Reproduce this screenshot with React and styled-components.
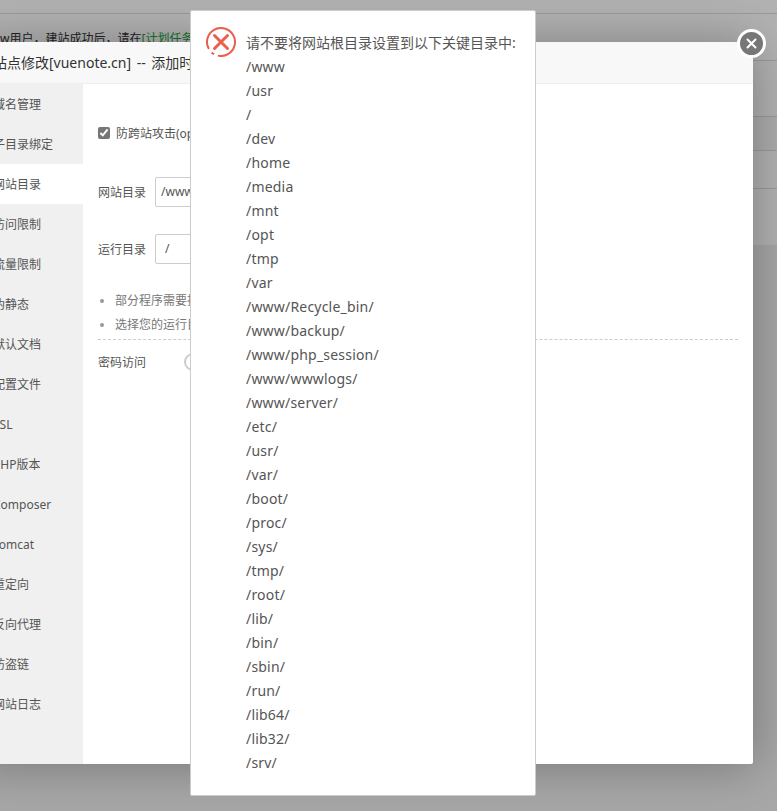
import React from 'react'
import styled, { createGlobalStyle } from 'styled-components'

const menuItems = ['域名管理', '子目录绑定', '网站目录', '访问限制', '流量限制', '伪静态', '默认文档', '配置文件', 'SSL', 'PHP版本', 'Composer', 'Tomcat', '重定向', '反向代理', '防盗链', '网站日志']

const blockedPaths = ['/www', '/usr', '/', '/dev', '/home', '/media', '/mnt', '/opt', '/tmp', '/var', '/www/Recycle_bin/', '/www/backup/', '/www/php_session/', '/www/wwwlogs/', '/www/server/', '/etc/', '/usr/', '/var/', '/boot/', '/proc/', '/sys/', '/tmp/', '/root/', '/lib/', '/bin/', '/sbin/', '/run/', '/lib64/', '/lib32/', '/srv/']

const GlobalStyle = createGlobalStyle`
  html, body {
    margin: 0;
    padding: 0;
    background: #f0f0f0;
    font-family: "Noto Sans", "Noto Sans CJK SC", sans-serif;
  }
`

const Page = styled.div`
  position: relative;
  width: 777px;
  height: 811px;
  overflow: hidden;
  background: #f0f0f0;
`

const BackRow = styled.div`
  height: ${p => p.$height}px;
  box-sizing: border-box;
  background: ${p => p.$tint || '#fff'};
  border-bottom: ${p => p.$flat ? 'none' : '1px solid #ddd'};
  font-size: 12px;
  line-height: 50px;
  color: #333;
  white-space: nowrap;
`

const GreenLink = styled.span`
  color: #20a53a;
`

const Shade = styled.div`
  position: absolute;
  inset: 0;
  background: rgba(0, 0, 0, 0.3);
`

const SiteModal = styled.div`
  position: absolute;
  left: -27px;
  top: 42px;
  width: 780px;
  height: 722px;
  display: flex;
  flex-direction: column;
  background: #fff;
  box-shadow: 1px 1px 50px rgba(0, 0, 0, 0.3);
  border-radius: 2px;
`

const ModalTitle = styled.div`
  height: 42px;
  box-sizing: border-box;
  padding-left: 20px;
  line-height: 41px;
  font-size: 14px;
  word-spacing: 2px;
  color: #333;
  background: #f8f8f8;
  border-bottom: 1px solid #eee;
  white-space: nowrap;
`

const CloseButton = styled.button`
  position: absolute;
  right: -13px;
  top: -13px;
  width: 29px;
  height: 29px;
  padding: 0;
  display: flex;
  align-items: center;
  justify-content: center;
  box-sizing: border-box;
  border: 3px solid #fff;
  border-radius: 50%;
  background: #777;
`

const ModalBody = styled.div`
  flex: 1;
  display: flex;
  min-height: 0;
`

const Menu = styled.div`
  width: 110px;
  background: #f0f0f0;
`

const MenuItem = styled.div`
  height: 40px;
  line-height: 42px;
  padding-left: 20px;
  font-size: 12px;
  color: #555;
  white-space: nowrap;
  background: ${p => p.$active ? '#fff' : 'transparent'};
`

const Content = styled.div`
  flex: 1;
  padding: 41px 15px 0;
  font-size: 12px;
  color: #555;
`

const CheckRow = styled.div`
  display: flex;
  align-items: center;
  height: 16px;
  gap: 6px;
`

const Check = styled.input`
  width: 12px;
  height: 12px;
  margin: 0;
  accent-color: #767676;
`

const FieldRow = styled.div`
  display: flex;
  align-items: center;
  height: 30px;
  gap: 9px;
  margin-top: ${p => p.$gap}px;
`

const Field = styled.div`
  width: ${p => p.$width}px;
  height: 30px;
  box-sizing: border-box;
  padding-left: ${p => p.$indent}px;
  border: 1px solid #ccc;
  border-radius: 2px;
  line-height: 28px;
  color: #555;
`

const Notes = styled.ul`
  margin: 25px 0 0;
  padding: 0 0 2px 17px;
  color: #777;
  border-bottom: 1px dashed #ccc;
  list-style: none;
`

const Note = styled.li`
  position: relative;
  height: 24px;
  line-height: 24px;
  &::before {
    content: '';
    position: absolute;
    left: -15px;
    top: 10px;
    width: 4px;
    height: 4px;
    border-radius: 50%;
    background: #999;
  }
`

const ToggleRow = styled.div`
  display: flex;
  align-items: center;
  height: 22px;
  margin-top: 11px;
  gap: 38px;
`

const Toggle = styled.div`
  width: 44px;
  height: 18px;
  box-sizing: border-box;
  border: 2px solid #ccc;
  border-radius: 9px;
`

const AlertBox = styled.div`
  position: absolute;
  left: 190px;
  top: 10px;
  width: 346px;
  height: 786px;
  box-sizing: border-box;
  display: flex;
  gap: 10px;
  padding: 16px 15px 0 15px;
  background: #fff;
  border: 1px solid #ccc;
  border-radius: 2px;
`

const AlertIcon = styled.svg`
  flex: none;
  width: 30px;
  height: 30px;
`

const AlertText = styled.div`
  padding-top: 4px;
  font-size: 14px;
  line-height: 24px;
  color: #555;
  white-space: nowrap;
`

const PathLine = styled.div`
  letter-spacing: 0.2px;
`

export default function App() {
  return (
    <Page>
      <GlobalStyle />
      <BackRow $height={14} />
      <BackRow $height={47}>w用户，建站成功后，请在<GreenLink>[计划任务]</GreenLink>中添加</BackRow>
      <BackRow $height={56} />
      <BackRow $height={34} $tint="#f8f8f8" />
      <BackRow $height={38} />
      <BackRow $height={56} $flat />
      <Shade />
      <SiteModal>
        <ModalTitle>站点修改[vuenote.cn] -- 添加时间[2020-03-12 10:21:05]</ModalTitle>
        <CloseButton aria-label="关闭">
          <svg width="15" height="15" viewBox="0 0 15 15">
            <path d="M3.5 3.5l8 8M11.5 3.5l-8 8" stroke="#fff" strokeWidth="2" strokeLinecap="round" />
          </svg>
        </CloseButton>
        <ModalBody>
          <Menu>
            {menuItems.map(item => (
              <MenuItem key={item} $active={item === '网站目录'}>{item}</MenuItem>
            ))}
          </Menu>
          <Content>
            <CheckRow>
              <Check type="checkbox" checked readOnly />
              <span>防跨站攻击(open_basedir)</span>
            </CheckRow>
            <FieldRow $gap={36}>
              <span>网站目录</span>
              <Field $width={300} $indent={5}>/www/wwwroot/vuenote.cn</Field>
            </FieldRow>
            <FieldRow $gap={27}>
              <span>运行目录</span>
              <Field $width={120} $indent={9}>/</Field>
            </FieldRow>
            <Notes>
              <Note>部分程序需要指定二级目录作为运行目录</Note>
              <Note>选择您的运行目录，点保存即可</Note>
            </Notes>
            <ToggleRow>
              <span>密码访问</span>
              <Toggle />
            </ToggleRow>
          </Content>
        </ModalBody>
      </SiteModal>
      <AlertBox>
        <AlertIcon viewBox="0 0 30 30">
          <circle cx="15" cy="15" r="14" fill="none" stroke="#e9604f" strokeWidth="2" strokeDasharray="76 4 3 5" transform="rotate(150 15 15)" />
          <path d="M8.5 8.5l13 13M21.5 8.5l-13 13" stroke="#e9604f" strokeWidth="3" strokeLinecap="round" />
        </AlertIcon>
        <AlertText>
          <div>请不要将网站根目录设置到以下关键目录中:</div>
          {blockedPaths.map((path, i) => <PathLine key={i}>{path}</PathLine>)}
        </AlertText>
      </AlertBox>
    </Page>
  )
}
